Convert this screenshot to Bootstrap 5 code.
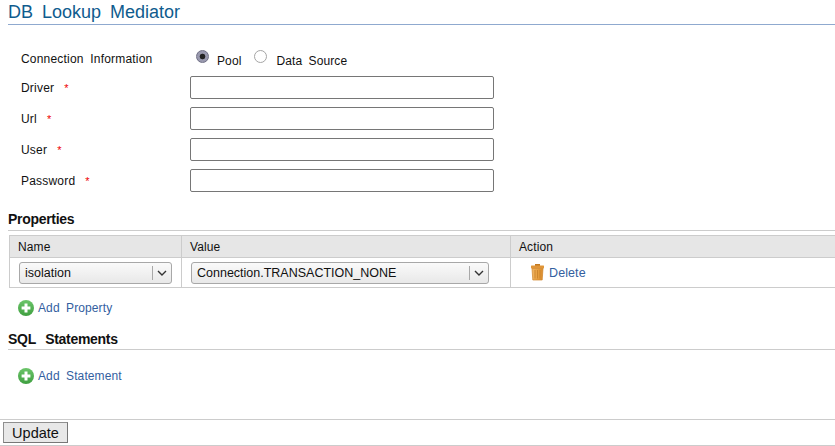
<!DOCTYPE html>
<html lang="en">
<head>
    <meta charset="UTF-8">
    <meta name="viewport" content="width=device-width, initial-scale=1.0">
    <title>DB Lookup Mediator</title>
    <link rel="stylesheet" href="https://cdn.jsdelivr.net/npm/bootstrap@5.3.0/dist/css/bootstrap.min.css">
    <style>
        html, body { height: 446px; overflow: hidden; }
        body { font-family: "Liberation Sans", Arial, sans-serif; font-size: 12px; letter-spacing: .1px; color: #111; background: #fff; line-height: 14px; word-spacing: 3px; }
        .page-wrap { padding: 0 0 0 8px; }
        .page-title { font-size: 18px; line-height: 24px; font-weight: 400; color: #0f5c8e; margin: 0; height: 25px; border-bottom: 1px solid #8fa9cf; word-spacing: 4px; letter-spacing: 0; }
        .conn-form { padding: 26px 0 0 13px; }
        .form-line { display: flex; align-items: center; height: 23px; margin-bottom: 8px; }
        .form-line.first { height: 16px; margin-bottom: 9px; }
        .line-label { width: 169px; flex-shrink: 0; letter-spacing: .2px; }
        .req { color: #e00; margin-left: 10px; font-size: 11px; }
        .text-box { width: 304px; height: 23px; border: 1px solid #767676; border-radius: 2px; background: #fff; padding: 0 4px; }
        .radio-dot { width: 13px; height: 13px; border-radius: 50%; border: 1px solid #a5a5a5; background: #fff; appearance: none; margin: 0; display: block; }
        .radio-dot:checked { border-color: #6f6f85; background: radial-gradient(circle, #222 0 2.5px, #9a9aaf 3.2px); }
        .radio-wrap { display: flex; align-items: flex-start; margin-left: 6px; margin-top: -1px; }
        .radio-wrap label { margin: 4px 13px 0 8px; }
        .radio-wrap label:last-child { margin-left: 9px; }
        .sect-title { font-size: 14px; line-height: 18px; font-weight: 700; color: #111; margin: 0; border-bottom: 1px solid #ccc; word-spacing: 6px; letter-spacing: -.3px; }
        .sect-props { margin-top: 18px; padding-bottom: 2px; }
        .prop-grid { width: 826px; margin: 4px 0 0 1px; border-collapse: collapse; table-layout: fixed; }
        .prop-grid th { background: #e6e6e6; font-weight: 400; height: 22px; padding: 0 8px; border: 1px solid #ccc; }
        .prop-grid td { height: 30px; padding: 0 9px; border: 1px solid #ccc; border-right: 0; }
        .prop-grid th:last-child { border-right: 0; }
        .combo { appearance: none; display: block; height: 22px; border: 1px solid #a8a8a8; border-radius: 3px; padding: 0 22px 0 5px; font: 12.5px/20px "Liberation Sans", Arial, sans-serif; color: #111; word-spacing: 0;
            background: linear-gradient(#a8a8a8, #a8a8a8) no-repeat right 18px top 3px / 1px 14px, linear-gradient(#fafafa, #e8e8e8);
        }
        .combo-arrow { position: absolute; right: 5px; top: 8px; pointer-events: none; }
        .combo-box { position: relative; display: block; }
        .act-link { color: #33609f; text-decoration: none; display: inline-flex; align-items: center; }
        .del-link { margin-left: 10px; gap: 4px; word-spacing: 0; padding-top: 3px; font-size: 12.5px; }
        .add-link { margin-left: 10px; gap: 4px; }
        .add-prop { margin-top: 12px; }
        .sect-sql { margin-top: 11px; padding-bottom: 1px; }
        .add-stmt { margin-top: 18px; }
        .foot-bar { position: absolute; left: 0; right: 0; top: 419px; height: 27px; border-top: 1px solid #ccc; border-bottom: 1px solid #ccc; padding: 2px 0 0 3px; }
        .update-btn { display: block; width: 65px; height: 21px; padding: 0; background: #e8e8e8; border: 1px solid #8f8f8f; border-right-color: #777; border-bottom-color: #777; border-radius: 0; font-size: 14.5px; line-height: 18px; color: #111; word-spacing: 0; }
    </style>
</head>
<body>
    <svg width="0" height="0" class="d-block">
        <defs>
            <linearGradient id="greenFill" x1="0" y1="0" x2="0" y2="1"><stop offset="0" stop-color="#6cc56a"/><stop offset="1" stop-color="#3f9f40"/></linearGradient>
            <linearGradient id="binFill" x1="0" y1="0" x2="1" y2="0"><stop offset="0" stop-color="#f0b565"/><stop offset="0.5" stop-color="#e8a040"/><stop offset="1" stop-color="#d98a2b"/></linearGradient>
            <symbol id="plusIcon" viewBox="0 0 16 16"><circle cx="8" cy="8" r="8" fill="url(#greenFill)"/><path d="M8 3.6v8.8M3.6 8h8.8" stroke="#fff" stroke-width="3"/></symbol>
        </defs>
    </svg>
    <div class="page-wrap">
        <h2 class="page-title">DB Lookup Mediator</h2>

        <!-- Connection form -->
        <div class="conn-form">
            <div class="form-line first">
                <div class="line-label">Connection Information</div>
                <div class="radio-wrap">
                    <input type="radio" class="radio-dot" name="conn" checked id="rPool"><label for="rPool">Pool</label>
                    <input type="radio" class="radio-dot" name="conn" id="rSource"><label for="rSource">Data Source</label>
                </div>
            </div>
            <div class="form-line"><div class="line-label">Driver<span class="req">*</span></div><input type="text" class="text-box"></div>
            <div class="form-line"><div class="line-label">Url<span class="req">*</span></div><input type="text" class="text-box"></div>
            <div class="form-line"><div class="line-label">User<span class="req">*</span></div><input type="text" class="text-box"></div>
            <div class="form-line"><div class="line-label">Password<span class="req">*</span></div><input type="text" class="text-box"></div>
        </div>

        <!-- Properties -->
        <h3 class="sect-title sect-props">Properties</h3>
        <table class="prop-grid">
            <colgroup><col style="width:172px"><col style="width:329px"><col></colgroup>
            <thead>
                <tr><th>Name</th><th>Value</th><th>Action</th></tr>
            </thead>
            <tbody>
                <tr>
                    <td>
                        <span class="combo-box" style="width:153px">
                            <select class="combo w-100"><option>isolation</option></select>
                            <svg class="combo-arrow" width="10" height="6" viewBox="0 0 10 6"><path d="M1 1l4 4 4-4" fill="none" stroke="#333" stroke-width="1.4"/></svg>
                        </span>
                    </td>
                    <td>
                        <span class="combo-box" style="width:298px">
                            <select class="combo w-100"><option>Connection.TRANSACTION_NONE</option></select>
                            <svg class="combo-arrow" width="10" height="6" viewBox="0 0 10 6"><path d="M1 1l4 4 4-4" fill="none" stroke="#333" stroke-width="1.4"/></svg>
                        </span>
                    </td>
                    <td>
                        <a href="#" class="act-link del-link">
                            <svg width="15" height="17" viewBox="0 0 15 17">
                                <rect x="5" y="0" width="5" height="2" fill="#c47a22"/>
                                <rect x="1" y="1.5" width="13" height="3" rx="0.5" fill="#e09538"/>
                                <path d="M2 4.5h11l-.8 11.5H2.8z" fill="url(#binFill)" stroke="#d08428" stroke-width="0.7"/>
                                <path d="M5 6v8.5M7.5 6v8.5M10 6v8.5" stroke="#c9832c" stroke-width="0.9"/>
                            </svg>
                            Delete
                        </a>
                    </td>
                </tr>
            </tbody>
        </table>
        <div class="add-prop">
            <a href="#" class="act-link add-link">
                <svg width="16" height="16"><use href="#plusIcon"/></svg>
                Add Property
            </a>
        </div>

        <!-- SQL Statements -->
        <h3 class="sect-title sect-sql">SQL Statements</h3>
        <div class="add-stmt">
            <a href="#" class="act-link add-link">
                <svg width="16" height="16"><use href="#plusIcon"/></svg>
                Add Statement
            </a>
        </div>
    </div>

    <div class="foot-bar">
        <button type="button" class="update-btn">Update</button>
    </div>

    <script src="https://cdn.jsdelivr.net/npm/bootstrap@5.3.0/dist/js/bootstrap.bundle.min.js"></script>
</body>
</html>
